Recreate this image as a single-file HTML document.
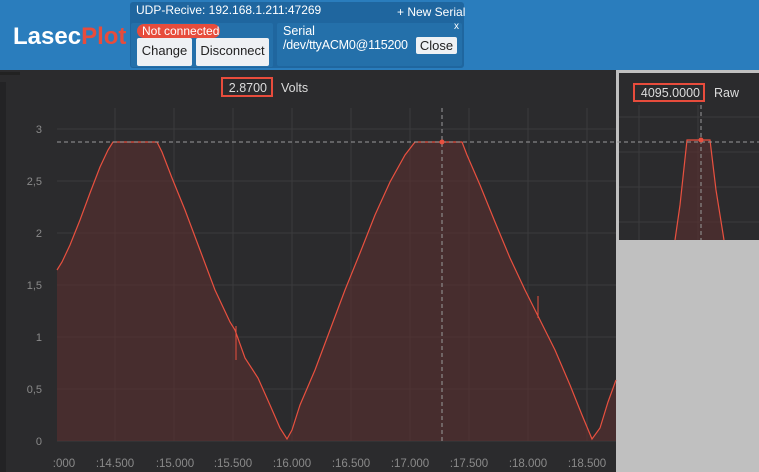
<!DOCTYPE html>
<html><head><meta charset="utf-8"><style>
*{margin:0;padding:0;box-sizing:border-box}
body{width:759px;height:472px;overflow:hidden;background:#c0c0c0;font-family:"Liberation Sans",sans-serif;position:relative}
.hdr{position:absolute;left:0;top:0;width:759px;height:70px;background:#2a7dbd}
.logo{position:absolute;left:13px;top:23px;font-size:24px;font-weight:bold;color:#fff;white-space:nowrap}
.logo span{color:#e74c3c}
.panel{position:absolute;left:130px;top:2px;width:334px;height:66px;background:#1f669f;border-radius:3px}
.t{position:absolute;color:#fff;font-size:12px;white-space:nowrap}
.box1{position:absolute;left:131px;top:23px;width:142px;height:44px;background:#2470aa;border-radius:2px}
.box2{position:absolute;left:277px;top:23px;width:185px;height:43px;background:#2470aa;border-radius:2px}
.badge{position:absolute;left:137px;top:24px;width:83px;height:14px;background:#e74c3c;border-radius:7px;color:#fff;font-size:12px;line-height:14px;padding-left:5px;white-space:nowrap}
.btn{position:absolute;background:#eef1f4;border-radius:2px;color:#222;font-size:13px;text-align:center;line-height:26px;white-space:nowrap}
.main{position:absolute;left:0;top:70px;width:616px;height:402px;background:#2b2b2d}
.side{position:absolute;left:619px;top:73px;width:140px;height:167px;background:#2b2b2d}
</style></head><body>
<div class="hdr"></div>
<div class="logo">Lasec<span>Plot</span></div>
<div class="panel"></div>
<div class="t" style="left:136px;top:3px">UDP-Recive: 192.168.1.211:47269</div>
<div class="t" style="left:397px;top:5px">+ New Serial</div>
<div class="box1"></div><div class="box2"></div>
<div class="badge">Not connected</div>
<div class="btn" style="left:137px;top:38px;width:55px;height:28px">Change</div>
<div class="btn" style="left:196px;top:38px;width:73px;height:28px">Disconnect</div>
<div class="t" style="left:283px;top:24px;font-size:12.5px">Serial</div>
<div class="t" style="left:283px;top:38px;font-size:12.5px;letter-spacing:-0.2px">/dev/ttyACM0@115200</div>
<div class="t" style="left:454px;top:21px;font-size:10px">x</div>
<div class="btn" style="left:416px;top:37px;width:41px;height:17px;line-height:17px;font-size:13px">Close</div>
<div class="main"></div>
<div style="position:absolute;left:0;top:72px;width:20px;height:3px;background:#222"></div>
<div style="position:absolute;left:0;top:82px;width:6px;height:390px;background:#232325"></div>
<div class="side"></div>
<svg width="759" height="472" style="position:absolute;left:0;top:0" font-family="Liberation Sans,sans-serif">
<g stroke="#3b3b3d" stroke-width="1">
<line x1="57" y1="129" x2="616" y2="129"/><line x1="57" y1="181" x2="616" y2="181"/><line x1="57" y1="233" x2="616" y2="233"/><line x1="57" y1="285" x2="616" y2="285"/><line x1="57" y1="337" x2="616" y2="337"/><line x1="57" y1="389" x2="616" y2="389"/><line x1="57" y1="441" x2="616" y2="441"/>
<line x1="115" y1="108" x2="115" y2="441"/><line x1="174" y1="108" x2="174" y2="441"/><line x1="233" y1="108" x2="233" y2="441"/><line x1="292" y1="108" x2="292" y2="441"/><line x1="351" y1="108" x2="351" y2="441"/><line x1="410" y1="108" x2="410" y2="441"/><line x1="469" y1="108" x2="469" y2="441"/><line x1="528" y1="108" x2="528" y2="441"/><line x1="587" y1="108" x2="587" y2="441"/>
<line x1="619" y1="117" x2="759" y2="117"/><line x1="619" y1="152" x2="759" y2="152"/><line x1="619" y1="187" x2="759" y2="187"/><line x1="619" y1="222" x2="759" y2="222"/>
<line x1="639" y1="105" x2="639" y2="240"/><line x1="698" y1="105" x2="698" y2="240"/>
</g>
<path d="M57,441 L57,270 L62,262 L70,245 L80,220 L90,193 L100,167 L108,150 L113,142 L157,142 L162,152 L172,178 L185,210 L200,250 L215,290 L230,322 L235,330 L245,358 L258,378 L270,405 L280,428 L287,439 L292,430 L300,405 L315,370 L330,330 L345,290 L360,253 L375,215 L390,182 L405,155 L415,142 L462,142 L467,155 L480,185 L495,222 L510,258 L525,290 L540,320 L555,350 L570,385 L582,415 L592,439 L600,428 L608,402 L616,380 L616,441 Z" fill="#5a2e2e" fill-opacity="0.6"/>
<path d="M57,270 L62,262 L70,245 L80,220 L90,193 L100,167 L108,150 L113,142 L157,142 L162,152 L172,178 L185,210 L200,250 L215,290 L230,322 L235,330 L245,358 L258,378 L270,405 L280,428 L287,439 L292,430 L300,405 L315,370 L330,330 L345,290 L360,253 L375,215 L390,182 L405,155 L415,142 L462,142 L467,155 L480,185 L495,222 L510,258 L525,290 L540,320 L555,350 L570,385 L582,415 L592,439 L600,428 L608,402 L616,380" fill="none" stroke="#e8503f" stroke-width="1.2"/>
<line x1="236" y1="326" x2="236" y2="360" stroke="#e8503f" stroke-width="1"/>
<line x1="538" y1="296" x2="538" y2="318" stroke="#e8503f" stroke-width="1"/>
<path d="M675,240 L680,205 L687,140 L710,140 L716,190 L724,240 Z" fill="#5a2e2e" fill-opacity="0.6"/>
<path d="M675,240 L680,205 L687,140 L710,140 L716,190 L724,240" fill="none" stroke="#e8503f" stroke-width="1.2"/>
<line x1="57" y1="142" x2="759" y2="142" stroke="#9a9a9a" stroke-dasharray="4,3"/>
<line x1="442" y1="108" x2="442" y2="441" stroke="#9a9a9a" stroke-dasharray="4,3"/>
<line x1="701" y1="105" x2="701" y2="240" stroke="#9a9a9a" stroke-dasharray="4,3"/>
<circle cx="442" cy="142" r="2.5" fill="#e8503f"/><circle cx="701" cy="140" r="2.5" fill="#e8503f"/>
<g fill="#8a8a8a" font-size="11" text-anchor="end">
<text x="42" y="133">3</text><text x="42" y="185">2,5</text><text x="42" y="237">2</text><text x="42" y="289">1,5</text><text x="42" y="341">1</text><text x="42" y="393">0,5</text><text x="42" y="445">0</text>
</g>
<g fill="#8a8a8a" font-size="11.5" text-anchor="middle">
<text x="64" y="467">:000</text><text x="115" y="467">:14.500</text><text x="175" y="467">:15.000</text><text x="233" y="467">:15.500</text><text x="292" y="467">:16.000</text><text x="351" y="467">:16.500</text><text x="410" y="467">:17.000</text><text x="469" y="467">:17.500</text><text x="528" y="467">:18.000</text><text x="587" y="467">:18.500</text>
</g>
<rect x="222" y="78" width="50" height="18" fill="none" stroke="#e74c3c" stroke-width="2"/>
<text x="267" y="92" fill="#ddd" font-size="12.5" text-anchor="end">2.8700</text>
<text x="281" y="92" fill="#ddd" font-size="12.5">Volts</text>
<rect x="634" y="84" width="70" height="17" fill="none" stroke="#e74c3c" stroke-width="2"/>
<text x="700" y="97" fill="#ddd" font-size="12.5" text-anchor="end">4095.0000</text>
<text x="714" y="97" fill="#ddd" font-size="12.5">Raw</text>
</svg>
</body></html>
